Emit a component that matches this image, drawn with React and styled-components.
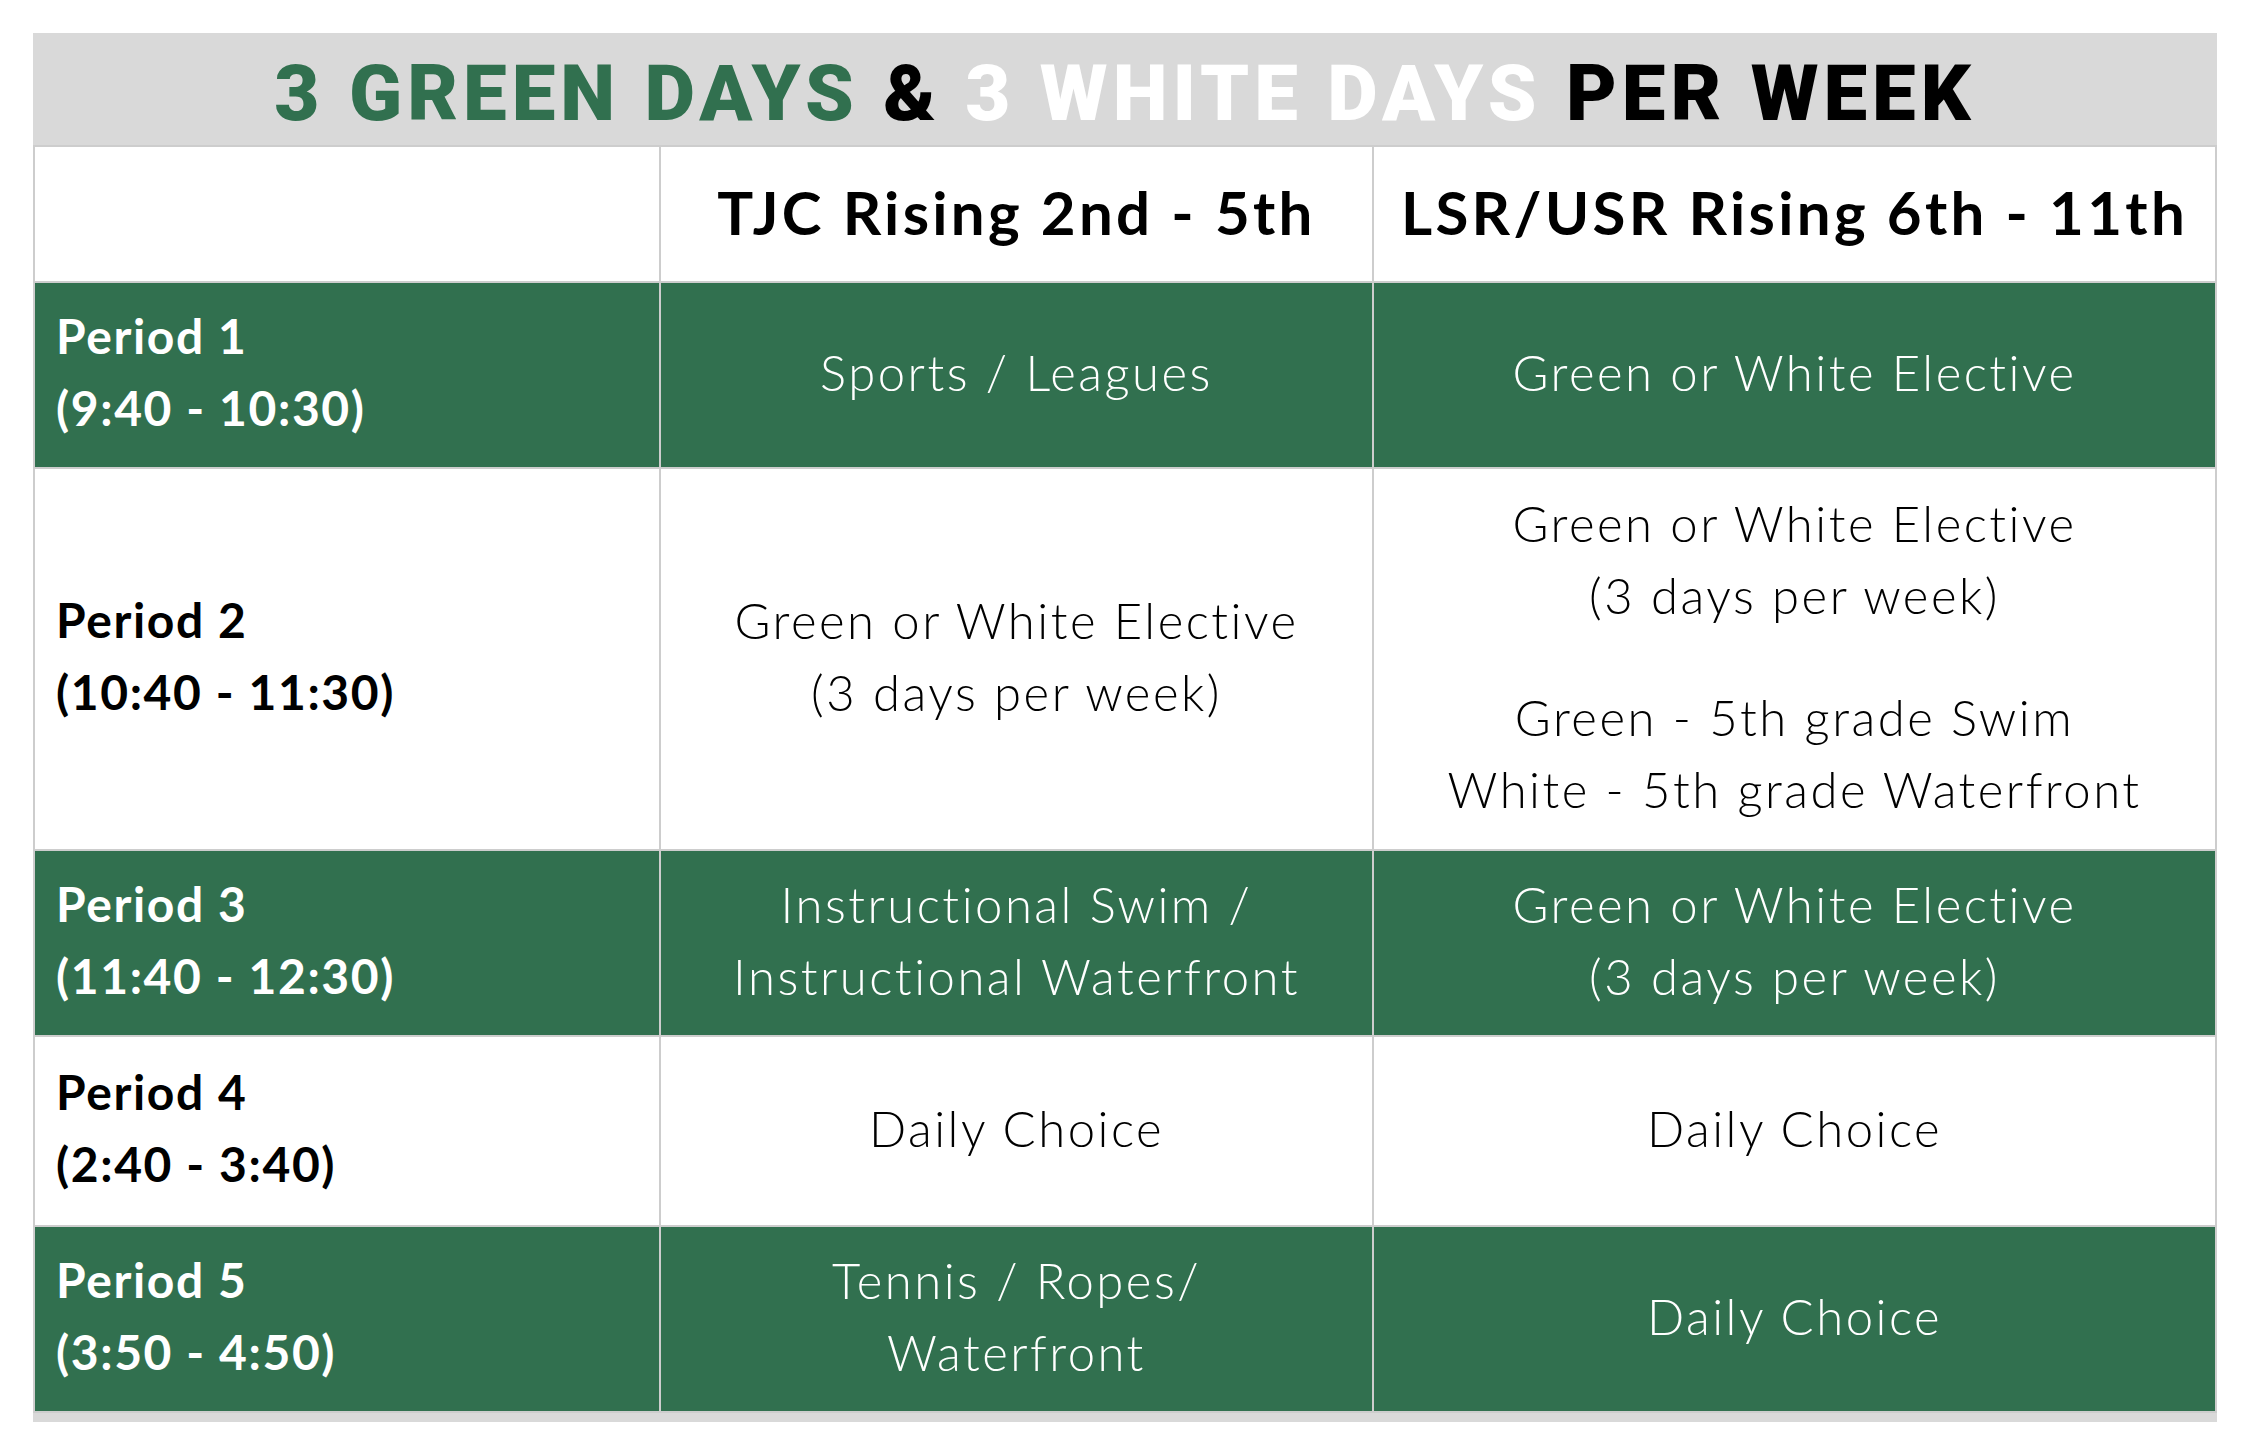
import React from 'react'
import styled, { createGlobalStyle } from 'styled-components'

const GREEN = '#31704f'
const LINE = '#cdcdcd'

const GlobalStyle = createGlobalStyle`
  html, body {
    margin: 0;
    padding: 0;
    background: #ffffff;
  }
  body {
    font-family: Lato, "Open Sans", sans-serif;
  }
`

const Page = styled.div`
  padding: 33px 0 0 33px;
`

const Board = styled.div`
  width: 2184px;
  background: #d9d9d9;
  padding-bottom: 9px;
`

const TitleBar = styled.h1`
  margin: 0;
  height: 112px;
  display: flex;
  align-items: center;
  justify-content: center;
  font-family: Roboto, "DejaVu Sans", sans-serif;
  font-weight: 900;
  font-size: 78px;
  letter-spacing: 5px;
  padding-top: 9px;
  box-sizing: border-box;
  color: #000;
`

const Word = styled.span`
  color: ${props => props.tone};
  white-space: pre;
`

const Table = styled.div`
  display: grid;
  grid-template-columns: 624px 711px 841px;
  grid-template-rows: 134px 184px 380px 184px 188px 184px;
  gap: 2px;
  border: 2px solid ${LINE};
  background: ${LINE};
`

const Cell = styled.div`
  background: ${props => props.green ? GREEN : '#ffffff'};
  color: ${props => props.green ? '#ffffff' : '#000000'};
  display: flex;
  flex-direction: column;
  justify-content: center;
  align-items: ${props => props.label ? 'flex-start' : 'center'};
  text-align: ${props => props.label ? 'left' : 'center'};
  padding: ${props => props.label ? '0 0 0 21px' : '0 10px'};
`

const ColHead = styled.div`
  font-weight: 700;
  font-size: 60px;
  letter-spacing: 3.3px;
  padding-bottom: 4px;
`

const Label = styled.div`
  font-weight: 700;
  font-size: 48px;
  letter-spacing: 1.6px;
  line-height: 72px;
  padding-bottom: 6px;
`

const Body = styled.div`
  font-weight: 300;
  font-size: 49px;
  letter-spacing: 2.5px;
  line-height: 72px;
  padding-bottom: 6px;
`

const Para = styled.p`
  margin: 0;
  & + & {
    margin-top: 50px;
  }
`

const rows = [
  { label: ['Period 1', '(9:40 - 10:30)'], green: true, a: [['Sports / Leagues']], b: [['Green or White Elective']] },
  {
    label: ['Period 2', '(10:40 - 11:30)'],
    a: [['Green or White Elective', '(3 days per week)']],
    b: [['Green or White Elective', '(3 days per week)'], ['Green - 5th grade Swim', 'White - 5th grade Waterfront']]
  },
  {
    label: ['Period 3', '(11:40 - 12:30)'], green: true,
    a: [['Instructional Swim /', 'Instructional Waterfront']],
    b: [['Green or White Elective', '(3 days per week)']]
  },
  { label: ['Period 4', '(2:40 - 3:40)'], a: [['Daily Choice']], b: [['Daily Choice']] },
  { label: ['Period 5', '(3:50 - 4:50)'], green: true, a: [['Tennis / Ropes/', 'Waterfront']], b: [['Daily Choice']] }
]

const Lines = ({ paras }) => (
  <Body>
    {paras.map((p, i) => (
      <Para key={i}>
        {p.map((l, j) => <div key={j}>{l}</div>)}
      </Para>
    ))}
  </Body>
)

export default function App() {
  return (
    <Page>
      <GlobalStyle />
      <Board>
        <TitleBar>
          <Word tone={GREEN}>3 GREEN DAYS </Word>
          <Word tone="#000">&amp; </Word>
          <Word tone="#ffffff">3 WHITE DAYS </Word>
          <Word tone="#000">PER WEEK</Word>
        </TitleBar>
        <Table>
          <Cell />
          <Cell><ColHead>TJC Rising 2nd - 5th</ColHead></Cell>
          <Cell><ColHead>LSR/USR Rising 6th - 11th</ColHead></Cell>
          {rows.map(r => (
            <React.Fragment key={r.label[0]}>
              <Cell green={r.green} label>
                <Label>{r.label[0]}<br />{r.label[1]}</Label>
              </Cell>
              <Cell green={r.green}><Lines paras={r.a} /></Cell>
              <Cell green={r.green}><Lines paras={r.b} /></Cell>
            </React.Fragment>
          ))}
        </Table>
      </Board>
    </Page>
  )
}
